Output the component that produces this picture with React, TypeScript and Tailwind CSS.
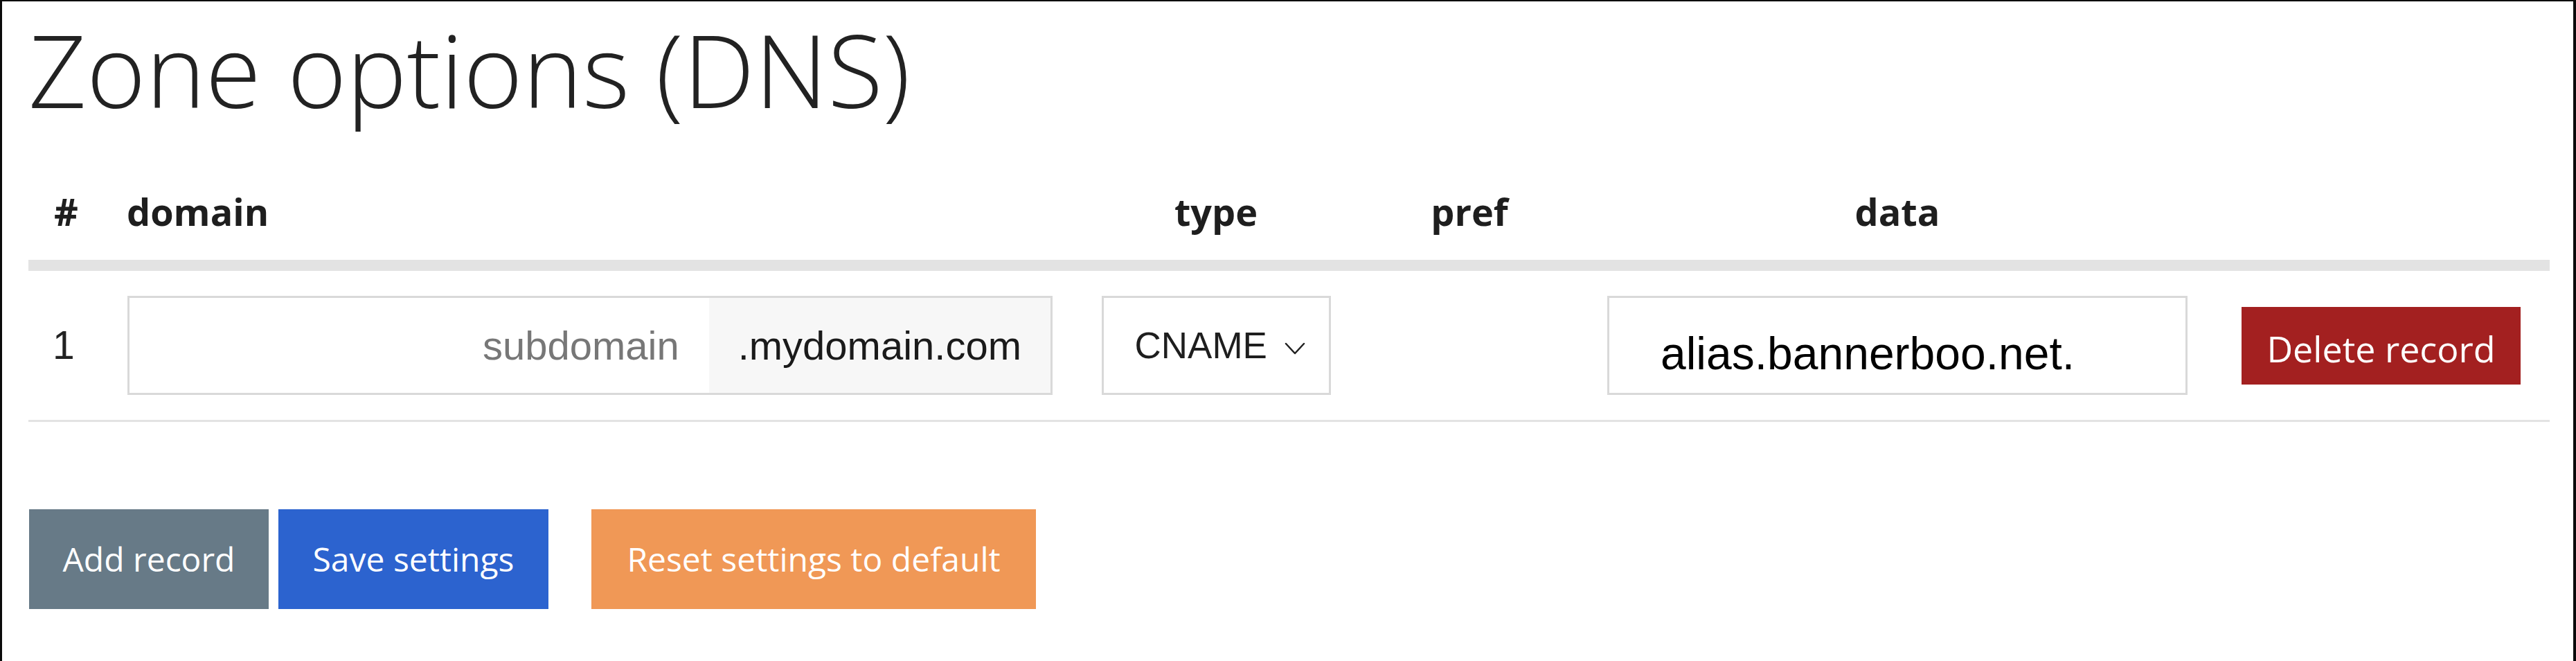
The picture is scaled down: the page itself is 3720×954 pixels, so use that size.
import { useState } from "react";

const sans = "font-['Open_Sans',sans-serif]";
const arial = "font-['Liberation_Sans',Arial,sans-serif]";

function Chevron() {
  return (
    <svg width="30" height="19" viewBox="0 0 30 19" fill="none" className="mt-[9px]">
      <polyline points="2,2 15,16 28,2" stroke="#222" strokeWidth="2.5" strokeLinecap="round" strokeLinejoin="round" />
    </svg>
  );
}

export default function App() {
  const [subdomain, setSubdomain] = useState("");
  const [data, setData] = useState("alias.bannerboo.net.");

  return (
    <div className="h-[954px] w-[3720px] border-t-[2px] border-l-[3px] border-r-[4px] border-[#0a0a0a] bg-white pl-[38px] pr-[34px] text-[#222]">
      {/* Title */}
      <h1 className={`${sans} mt-[10px] text-[146px] leading-[176px] font-light text-[#222]`}>
        Zone options (DNS)
      </h1>

      {/* Header row */}
      <div
        className={`${sans} grid grid-cols-[105px_1412px_396px_336px_900px_492px] border-b-[16px] border-[#e3e3e3] pt-[77px] pb-[29px] text-[54px] leading-[81px] font-bold text-[#1e1e1e]`}
      >
        <div className="pl-[37px]">#</div>
        <div className="pl-[37px]">domain</div>
        <div className="text-center">type</div>
        <div className="text-center">pref</div>
        <div className="text-center">data</div>
        <div />
      </div>

      {/* Record row */}
      <div className="grid h-[218px] grid-cols-[105px_1412px_396px_336px_900px_492px] items-center border-b-[3px] border-[#e3e3e3]">
        <div className={`${arial} pl-[35px] text-[57px] text-[#222]`}>1</div>

        <div className="pl-[38px]">
          <div className="flex h-[143px] w-[1336px] border-[3px] border-[#d9d9d9]">
            <input
              value={subdomain}
              onChange={(e) => setSubdomain(e.target.value)}
              placeholder="subdomain"
              className={`${arial} min-w-0 flex-1 bg-white pr-[43px] text-right text-[58px] text-[#222] outline-none placeholder:text-[#777]`}
            />
            <div className={`${arial} flex items-center bg-[#f7f7f7] px-[42px] text-[58px] text-[#1a1a1a]`}>
              .mydomain.com
            </div>
          </div>
        </div>

        <div className="flex justify-center">
          <div className={`${arial} flex h-[143px] w-[331px] items-center gap-[25px] border-[3px] border-[#d9d9d9] pl-[45px] text-[53px] text-[#1e1e1e]`}>
            <span>CNAME</span>
            <Chevron />
          </div>
        </div>

        <div />

        <div className="flex justify-center">
          <input
            value={data}
            onChange={(e) => setData(e.target.value)}
            className={`${arial} h-[143px] w-[838px] border-[3px] border-[#d9d9d9] bg-white pt-[22px] pl-[74px] text-[66px] text-black outline-none`}
          />
        </div>

        <div className="pl-[47px]">
          <button className={`${sans} h-[112px] w-[403px] bg-[#a32020] pt-[8px] text-[52px] text-white`}>
            Delete record
          </button>
        </div>
      </div>

      {/* Actions */}
      <div className={`${sans} mt-[126px] flex pl-[1px] text-[48px] text-white`}>
        <button className="h-[144px] w-[346px] bg-[#677a87]">Add record</button>
        <button className="ml-[14px] h-[144px] w-[390px] bg-[#2c63cf]">Save settings</button>
        <button className="ml-[62px] h-[144px] w-[642px] bg-[#f09856]">Reset settings to default</button>
      </div>
    </div>
  );
}
